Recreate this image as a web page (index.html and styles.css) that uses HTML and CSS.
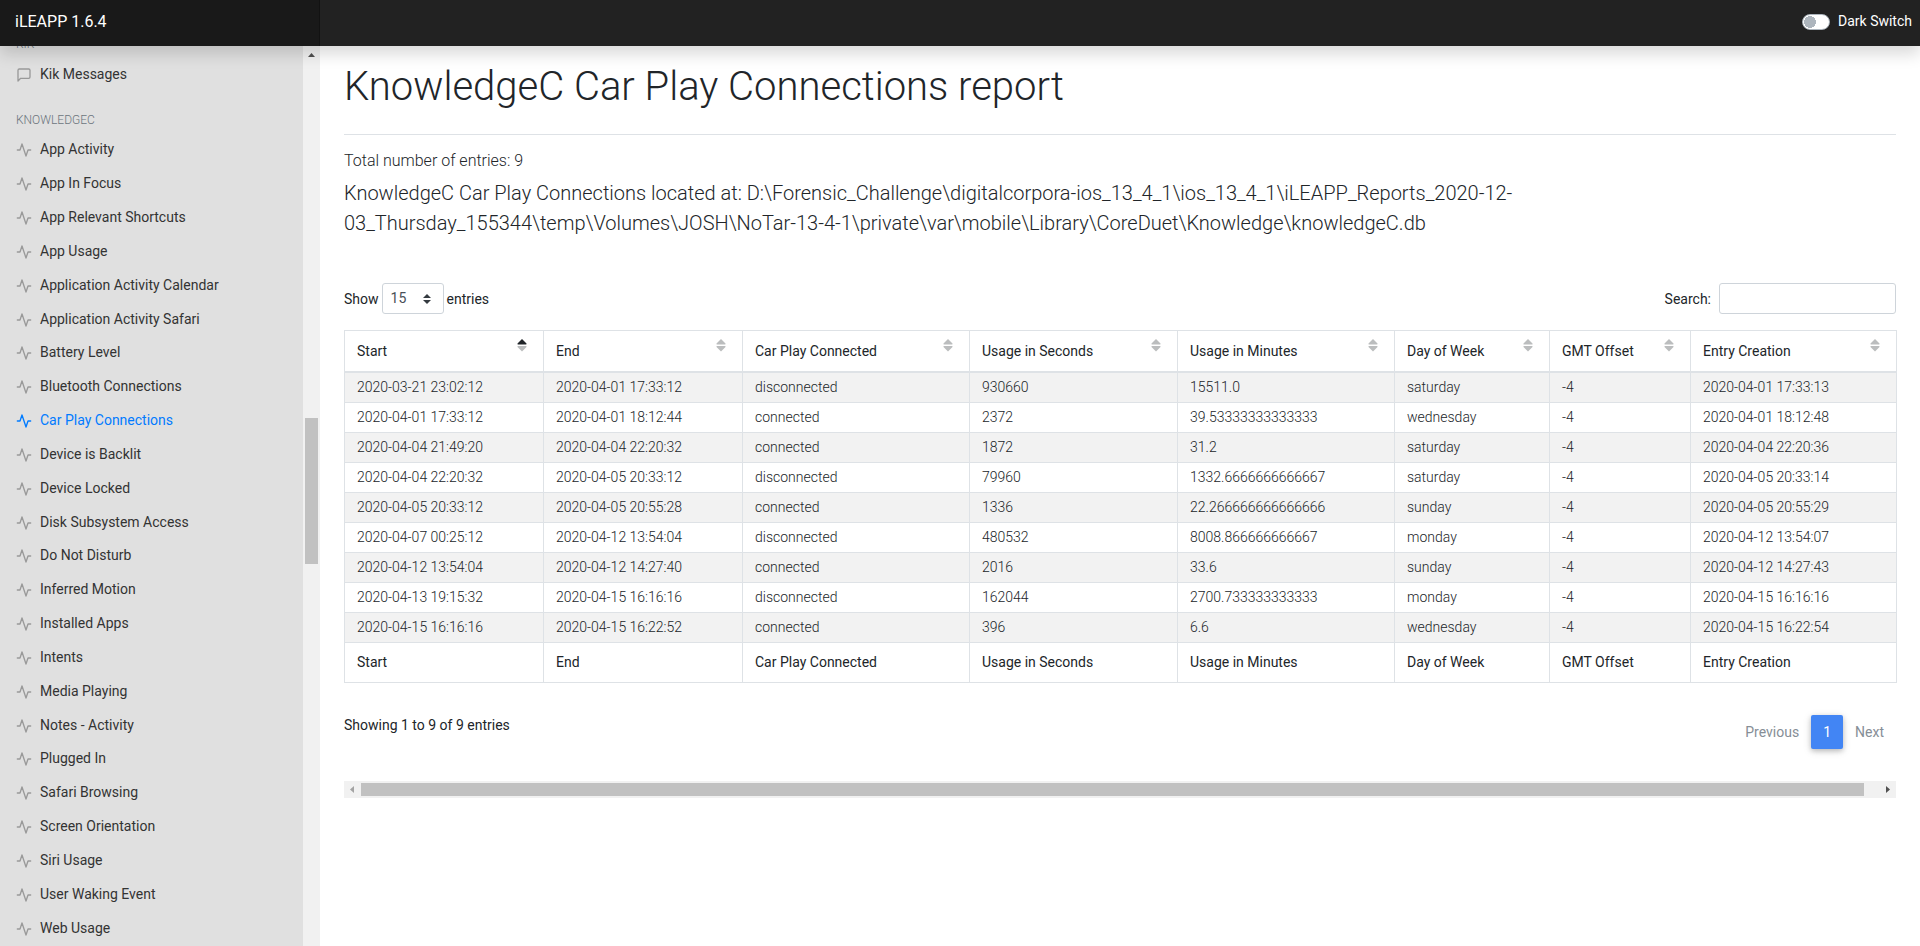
FILE: index.html
```html
<!DOCTYPE html>
<html lang="en">
<head>
<meta charset="utf-8">
<title>KnowledgeC Car Play Connections report</title>
<link rel="stylesheet" href="styles.css">
</head>
<body>
<svg class="sprite" aria-hidden="true">
  <symbol id="activity" viewBox="0 0 24 24"><polyline points="22 12 18 12 15 21 9 3 6 12 2 12"/></symbol>
  <symbol id="message" viewBox="0 0 24 24"><path d="M21 15a2 2 0 0 1-2 2H7l-4 4V5a2 2 0 0 1 2-2h14a2 2 0 0 1 2 2z"/></symbol>
  <symbol id="sort" viewBox="0 0 10 14"><path class="up" d="M5 1 9.500 5.500Q9.800 6.500 9 6.500H1Q.2 6.500.5 5.500Z"/><path class="down" d="M5 13.500 9.500 9Q9.800 8 9 8H1Q.2 8 .5 9Z"/></symbol>
</svg>
<header class="topbar">
  <a class="brand" href="#">iLEAPP 1.6.4</a>
  <label class="switch"><input type="checkbox" class="switch-box">Dark Switch</label>
</header>
<div class="page">
  <aside class="sidebar">
    <nav class="menu">
      <h6 class="menu-title">Kik</h6>
      <ul class="menu-list single">
        <li><a href="#"><svg class="icon"><use href="#message"/></svg>Kik Messages</a></li>
      </ul>
      <h6 class="menu-title spaced">KnowledgeC</h6>
      <ul class="menu-list filled">
        <li><a href="#"><svg class="icon"><use href="#activity"/></svg>App Activity</a></li>
        <li><a href="#"><svg class="icon"><use href="#activity"/></svg>App In Focus</a></li>
        <li><a href="#"><svg class="icon"><use href="#activity"/></svg>App Relevant Shortcuts</a></li>
        <li><a href="#"><svg class="icon"><use href="#activity"/></svg>App Usage</a></li>
        <li><a href="#"><svg class="icon"><use href="#activity"/></svg>Application Activity Calendar</a></li>
        <li><a href="#"><svg class="icon"><use href="#activity"/></svg>Application Activity Safari</a></li>
        <li><a href="#"><svg class="icon"><use href="#activity"/></svg>Battery Level</a></li>
        <li><a href="#"><svg class="icon"><use href="#activity"/></svg>Bluetooth Connections</a></li>
        <li><a class="active" href="#"><svg class="icon"><use href="#activity"/></svg>Car Play Connections</a></li>
        <li><a href="#"><svg class="icon"><use href="#activity"/></svg>Device is Backlit</a></li>
        <li><a href="#"><svg class="icon"><use href="#activity"/></svg>Device Locked</a></li>
        <li><a href="#"><svg class="icon"><use href="#activity"/></svg>Disk Subsystem Access</a></li>
        <li><a href="#"><svg class="icon"><use href="#activity"/></svg>Do Not Disturb</a></li>
        <li><a href="#"><svg class="icon"><use href="#activity"/></svg>Inferred Motion</a></li>
        <li><a href="#"><svg class="icon"><use href="#activity"/></svg>Installed Apps</a></li>
        <li><a href="#"><svg class="icon"><use href="#activity"/></svg>Intents</a></li>
        <li><a href="#"><svg class="icon"><use href="#activity"/></svg>Media Playing</a></li>
        <li><a href="#"><svg class="icon"><use href="#activity"/></svg>Notes - Activity</a></li>
        <li><a href="#"><svg class="icon"><use href="#activity"/></svg>Plugged In</a></li>
        <li><a href="#"><svg class="icon"><use href="#activity"/></svg>Safari Browsing</a></li>
        <li><a href="#"><svg class="icon"><use href="#activity"/></svg>Screen Orientation</a></li>
        <li><a href="#"><svg class="icon"><use href="#activity"/></svg>Siri Usage</a></li>
        <li><a href="#"><svg class="icon"><use href="#activity"/></svg>User Waking Event</a></li>
        <li><a href="#"><svg class="icon"><use href="#activity"/></svg>Web Usage</a></li>
      </ul>
    </nav>
    <div class="vbar" aria-hidden="true">
      <svg class="vbar-arrow" viewBox="0 0 7 4"><path d="M0 4 3.500 0 7 4z"/></svg>
      <div class="vbar-above"></div>
      <div class="vbar-thumb"></div>
      <div class="vbar-below"></div>
    </div>
  </aside>
  <main class="content">
    <h1 class="title">KnowledgeC Car Play Connections report</h1>
    <h6 class="total">Total number of entries: 9</h6>
    <p class="lead">KnowledgeC Car Play Connections located at: D:\Forensic_Challenge\digitalcorpora-ios_13_4_1\ios_13_4_1\iLEAPP_Reports_2020-12-03_Thursday_155344\temp\Volumes\JOSH\NoTar-13-4-1\private\var\mobile\Library\CoreDuet\Knowledge\knowledgeC.db</p>
    <div class="controls">
      <label class="length">Show <select class="field length-select"><option>15</option></select> entries</label>
      <label class="search">Search: <input type="search" class="field search-input"></label>
    </div>
    <table class="report">
      <colgroup><col class="c-time"><col class="c-time"><col class="c-state"><col class="c-sec"><col class="c-min"><col class="c-day"><col class="c-gmt"><col class="c-entry"></colgroup>
      <thead>
        <tr>
          <th><button class="sort asc">Start<svg><use href="#sort"/></svg></button></th>
          <th><button class="sort">End<svg><use href="#sort"/></svg></button></th>
          <th><button class="sort">Car Play Connected<svg><use href="#sort"/></svg></button></th>
          <th><button class="sort">Usage in Seconds<svg><use href="#sort"/></svg></button></th>
          <th><button class="sort">Usage in Minutes<svg><use href="#sort"/></svg></button></th>
          <th><button class="sort">Day of Week<svg><use href="#sort"/></svg></button></th>
          <th><button class="sort">GMT Offset<svg><use href="#sort"/></svg></button></th>
          <th><button class="sort">Entry Creation<svg><use href="#sort"/></svg></button></th>
        </tr>
      </thead>
      <tbody>
        <tr><td>2020-03-21 23:02:12</td><td>2020-04-01 17:33:12</td><td>disconnected</td><td>930660</td><td>15511.0</td><td>saturday</td><td>-4</td><td>2020-04-01 17:33:13</td></tr>
        <tr><td>2020-04-01 17:33:12</td><td>2020-04-01 18:12:44</td><td>connected</td><td>2372</td><td>39.53333333333333</td><td>wednesday</td><td>-4</td><td>2020-04-01 18:12:48</td></tr>
        <tr><td>2020-04-04 21:49:20</td><td>2020-04-04 22:20:32</td><td>connected</td><td>1872</td><td>31.2</td><td>saturday</td><td>-4</td><td>2020-04-04 22:20:36</td></tr>
        <tr><td>2020-04-04 22:20:32</td><td>2020-04-05 20:33:12</td><td>disconnected</td><td>79960</td><td>1332.6666666666667</td><td>saturday</td><td>-4</td><td>2020-04-05 20:33:14</td></tr>
        <tr><td>2020-04-05 20:33:12</td><td>2020-04-05 20:55:28</td><td>connected</td><td>1336</td><td>22.266666666666666</td><td>sunday</td><td>-4</td><td>2020-04-05 20:55:29</td></tr>
        <tr><td>2020-04-07 00:25:12</td><td>2020-04-12 13:54:04</td><td>disconnected</td><td>480532</td><td>8008.866666666667</td><td>monday</td><td>-4</td><td>2020-04-12 13:54:07</td></tr>
        <tr><td>2020-04-12 13:54:04</td><td>2020-04-12 14:27:40</td><td>connected</td><td>2016</td><td>33.6</td><td>sunday</td><td>-4</td><td>2020-04-12 14:27:43</td></tr>
        <tr><td>2020-04-13 19:15:32</td><td>2020-04-15 16:16:16</td><td>disconnected</td><td>162044</td><td>2700.733333333333</td><td>monday</td><td>-4</td><td>2020-04-15 16:16:16</td></tr>
        <tr><td>2020-04-15 16:16:16</td><td>2020-04-15 16:22:52</td><td>connected</td><td>396</td><td>6.6</td><td>wednesday</td><td>-4</td><td>2020-04-15 16:22:54</td></tr>
      </tbody>
      <tfoot>
        <tr><th>Start</th><th>End</th><th>Car Play Connected</th><th>Usage in Seconds</th><th>Usage in Minutes</th><th>Day of Week</th><th>GMT Offset</th><th>Entry Creation</th></tr>
      </tfoot>
    </table>
    <div class="summary">
      <div class="info">Showing 1 to 9 of 9 entries</div>
      <div class="pager">
        <a class="page-link" href="#">Previous</a>
        <a class="page-link current" href="#">1</a>
        <a class="page-link" href="#">Next</a>
      </div>
    </div>
    <div class="hbar" aria-hidden="true">
      <svg class="hbar-arrow off" viewBox="0 0 4 7"><path d="M4 0 0 3.500 4 7z"/></svg>
      <div class="hbar-thumb"></div>
      <svg class="hbar-arrow" viewBox="0 0 4 7"><path d="M0 0 4 3.500 0 7z"/></svg>
    </div>
  </main>
</div>
</body>
</html>
```
FILE: styles.css
```css
* { box-sizing: border-box; }
body {
  margin: 0;
  height: 100vh;
  display: flex;
  flex-direction: column;
  overflow: hidden;
  background: #fff;
  color: #212529;
  font: 300 16px/24px Roboto, "Liberation Sans", sans-serif;
}
a { color: inherit; text-decoration: none; }
h1, h6, p, ul { margin: 0; padding: 0; }
h1, h6 { font-weight: 300; }
.sprite { display: none; }

.topbar {
  position: relative;
  z-index: 2;
  flex: none;
  display: flex;
  justify-content: space-between;
  background: #222;
  color: #fff;
  font-weight: 400;
  box-shadow: 0 8px 16px rgba(0, 0, 0, .15);
}
.brand {
  width: 320px;
  padding: 10px 15px 12px;
  background: #191919;
  box-shadow: inset -1px 0 0 rgba(0, 0, 0, .25);
}
.switch {
  display: flex;
  align-items: center;
  gap: 8px;
  padding: 0 8px 4px 0;
  font-size: 14px;
}
.switch-box {
  appearance: none;
  width: 28px;
  height: 16px;
  margin: 2px 0 0;
  border: 1px solid #adb5bd;
  border-radius: 8px;
  background: radial-gradient(circle at 7px 7px, #adb5bd 6px, #fff 6px);
}

.page { flex: 1; min-height: 0; display: flex; }
.sidebar {
  flex: none;
  width: 320px;
  display: flex;
  overflow: hidden;
  background: #e0e0e0;
}
.menu {
  flex: 1;
  display: flex;
  flex-direction: column;
  margin-top: -12px;
  padding-bottom: 2px;
  font-size: 14px;
  font-weight: 400;
}
.menu-title {
  padding: 0 16px;
  margin-bottom: 2px;
  color: #6c757d;
  font-size: 12px;
  line-height: 20px;
  text-transform: uppercase;
}
.menu-title.spaced { margin-top: 20px; }
.menu-list { display: grid; grid-auto-rows: 1fr; list-style: none; }
.menu-list.single { grid-auto-rows: 34px; }
.menu-list.filled { flex: 1; }
.menu-list a {
  height: 100%;
  display: flex;
  align-items: center;
  gap: 8px;
  padding: 1px 16px 0;
  color: #333;
}
.icon {
  width: 16px;
  height: 16px;
  margin-top: 2px;
  fill: none;
  stroke: #999;
  stroke-width: 2;
  stroke-linecap: round;
  stroke-linejoin: round;
}
.menu-list .active { color: #007bff; }
.active .icon { stroke: #007bff; }

.vbar {
  width: 17px;
  display: flex;
  flex-direction: column;
  align-items: center;
  padding-top: 7px;
  background: #f1f1f1;
}
.vbar-arrow { width: 7px; height: 4px; fill: #505050; }
.vbar-above { flex: 361; }
.vbar-thumb { flex: 146; width: 13px; background: #c1c1c1; }
.vbar-below { flex: 382; }

.content { flex: 1; min-width: 0; padding: 17px 24px; }
.title {
  padding-bottom: 23px;
  margin-bottom: 16px;
  border-bottom: 1px solid #dee2e6;
  font-size: 40px;
  line-height: 48px;
}
.total { margin-bottom: 8px; font-size: 16px; line-height: 19px; }
.lead { font-size: 20px; line-height: 30px; }

.controls {
  display: flex;
  justify-content: space-between;
  margin: 45px 0 16px;
  font-size: 14px;
  font-weight: 400;
}
.length, .search { display: flex; align-items: center; gap: 3px; }
.search { gap: 8px; }
.field {
  height: 31px;
  border: 1px solid #ced4da;
  border-radius: 3px;
  background: #fff;
  color: #495057;
  font: 400 14px/21px Roboto, "Liberation Sans", sans-serif;
}
.length-select {
  appearance: none;
  width: 62px;
  padding: 0 8px;
  background: url("data:image/svg+xml,%3Csvg xmlns='http://www.w3.org/2000/svg' viewBox='0 0 4 5'%3E%3Cpath fill='%23343a40' d='M2 0L0 2h4zm0 5L0 3h4z'/%3E%3C/svg%3E") no-repeat right 12px center / 8px 10px;
}
.search-input { width: 177px; padding: 0 8px; }

.report {
  width: 100%;
  table-layout: fixed;
  border-collapse: collapse;
  font-size: 14px;
  line-height: 21px;
}
.c-time { width: 199px; }
.c-state { width: 227px; }
.c-sec { width: 208px; }
.c-min { width: 217px; }
.c-day { width: 155px; }
.c-gmt { width: 141px; }
.c-entry { width: 206px; }
.report th, .report td {
  padding: 4px 12px;
  border: 1px solid #dee2e6;
  text-align: left;
  white-space: nowrap;
}
.report th { font-weight: 400; padding: 9px 12px; }
.report thead th { padding: 7px 16px 0 12px; border-bottom-width: 2px; }
.report tbody tr:nth-child(odd) { background: #f2f2f2; }
.sort {
  width: 100%;
  height: 33px;
  display: flex;
  justify-content: space-between;
  align-items: flex-start;
  padding: 0;
  border: 0;
  background: none;
  color: inherit;
  font: inherit;
  line-height: 26px;
  cursor: pointer;
}
.sort svg { width: 10px; height: 14px; fill: #bbbdbe; }
.asc svg { color: #212529; }
.up { fill: currentColor; }
.sort:not(.asc) svg { color: #bbbdbe; }

.summary {
  display: flex;
  justify-content: space-between;
  align-items: flex-start;
  margin-top: 32px;
  font-size: 14px;
  line-height: 21px;
  font-weight: 400;
}
.pager { display: flex; }
.page-link { padding: 7px 12px 6px; color: #868e96; }
.page-link.current {
  border-radius: 2px;
  background: #4285f4;
  color: #fff;
  box-shadow: 0 2px 5px rgba(0, 0, 0, .2), 0 2px 10px rgba(0, 0, 0, .12);
}

.hbar {
  display: flex;
  align-items: center;
  height: 17px;
  margin-top: 32px;
  padding: 0 6px;
  background: #f1f1f1;
}
.hbar-thumb { flex: 1; height: 13px; margin: 0 22px 0 7px; background: #c1c1c1; }
.hbar-arrow { width: 4px; height: 7px; fill: #505050; }
.hbar-arrow.off { fill: #a3a3a3; }
```
